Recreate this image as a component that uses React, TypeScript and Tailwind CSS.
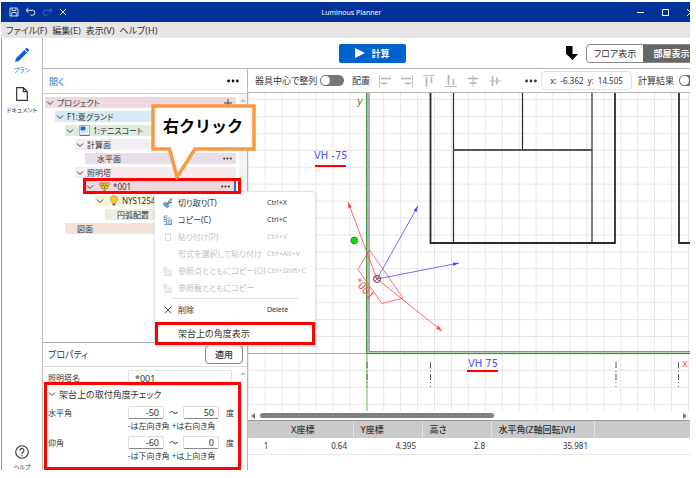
import { useState } from "react";
import clsx from "clsx";

const Dots = ({ className = "" }) => (
  <svg viewBox="0 0 12 4" className={clsx("shrink-0", className)} fill="currentColor">
    <circle cx="1.6" cy="2" r="1.4" />
    <circle cx="6" cy="2" r="1.4" />
    <circle cx="10.4" cy="2" r="1.4" />
  </svg>
);

const Chevron = () => (
  <svg viewBox="0 0 8 8" className="size-2 shrink-0" fill="none" stroke="#444">
    <path d="M1 2.5 4 5.5 7 2.5" />
  </svg>
);

const TowerIcon = () => (
  <svg viewBox="0 0 11 10" className="h-[10px] w-[11px] shrink-0" fill="#f7c62f" stroke="#6b5a1c" strokeWidth=".5">
    <path d="M5.5 5v4.6" />
    <circle cx="2.2" cy="2.3" r="1.8" />
    <circle cx="5.5" cy="2.3" r="1.8" />
    <circle cx="8.8" cy="2.3" r="1.8" />
    <circle cx="3.8" cy="5.2" r="1.8" />
    <circle cx="7.2" cy="5.2" r="1.8" />
    <path d="M4 8.6h3" />
  </svg>
);

const BulbIcon = () => (
  <svg viewBox="0 0 10 12" className="h-[11px] w-[10px] shrink-0">
    <path d="M5 .6a3.9 3.9 0 0 0-2.2 7.1L3.2 9h3.6l.4-1.3A3.9 3.9 0 0 0 5 .6Z" fill="#fbc52d" stroke="#a37a14" strokeWidth=".6" />
    <path d="M3.5 9.6h3v1.6h-3z" fill="#444" />
  </svg>
);

const RoomIcon = () => (
  <svg viewBox="0 0 11 11" className="size-[11px] shrink-0">
    <path d="M.5.5h10v10H.5z" fill="#fff" stroke="#9db7cf" />
    <path d="M1.5 1.5h5v4h-5z" fill="#0d6fe0" />
    <path d="M7.5 1.5h2v7h-8v-2h6z" fill="#d3e3f2" />
    <path d="M1 10.3h9.5" stroke="#444" strokeWidth=".8" />
  </svg>
);

const tree = [
  { name: "プロジェクト", pad: "ml-0", bg: "bg-[#eed9e0]", open: true, end: "plus" },
  { name: "F1:夏グランド", pad: "ml-[10px]", bg: "bg-[#d7e9f2]", open: true },
  { name: "1:テニスコート", pad: "ml-[20px]", bg: "bg-[#dfebe0]", open: true, icon: <RoomIcon /> },
  { name: "計算面", pad: "ml-[30px]", bg: "bg-[#f3edf5]", open: true },
  { name: "水平面", pad: "ml-[40px]", bg: "bg-[#e8deea]", end: "dots" },
  { name: "照明塔", pad: "ml-[30px]", bg: "bg-[#f7ebf0]", open: true },
  { name: "*001", pad: "ml-[40px]", bg: "bg-[#f0d8e1] border-r-2 border-[#1c6fd0]", open: true, icon: <TowerIcon />, end: "dots" },
  { name: "NYS12545", pad: "ml-[50px]", bg: "bg-[#f5f2da]", open: true, icon: <BulbIcon /> },
  { name: "円弧配置", pad: "ml-[60px]", bg: "bg-[#eeeedd]" },
  { name: "図面", pad: "ml-[20px]", bg: "bg-[#f2e2d8]" },
];

const menuItems = [
  { name: "切り取り(T)", key: "Ctrl+X", icon: "cut" },
  { name: "コピー(C)", key: "Ctrl+C", icon: "copy" },
  { name: "貼り付け(P)", key: "Ctrl+V", icon: "paste", off: true },
  { name: "形式を選択して貼り付け", key: "Ctrl+Alt+V", off: true },
  { name: "参照点とともにコピー(O)", key: "Ctrl+Shift+C", icon: "copy", off: true },
  { name: "参照軸とともにコピー", icon: "copy", off: true },
];

function MenuIcon({ kind }) {
  return (
    <svg viewBox="0 0 10 10" className="size-[10px] shrink-0" fill="none" strokeWidth=".9">
      {kind === "cut" && (
        <>
          <path d="M3.6 6 7.8.6 9 1.2 5 6.6M4.4 5.4 9 4.2" stroke="#5a5a5a" />
          <circle cx="2.2" cy="6" r="1.5" stroke="#2a86c8" fill="#6fb4e2" />
          <circle cx="4.2" cy="8" r="1.4" stroke="#2a86c8" fill="#6fb4e2" />
        </>
      )}
      {kind === "copy" && (
        <>
          <path d="M1 1h3.5M1 1v5.5h2" stroke="#8a98a6" />
          <path d="M3.5 2.8h3l2 2v4.4h-5z" stroke="#8a98a6" fill="#eef4fa" />
          <path d="M1 2.5h2M1 4.5h2M4.6 5.4h2.8M4.6 7.2h2.8M1 9.3h8" stroke="#4a90cf" />
        </>
      )}
      {kind === "paste" && <path d="M2.5 2h5v6.5h-5zM4 1.6h2" stroke="#777" />}
      {kind === "delete" && <path d="m1.5 1.5 7 7M8.5 1.5l-7 7" stroke="#444" />}
    </svg>
  );
}

const aligns = [
  { label: "左揃え", thin: "M.5 0v12", thick: "M2 3.5h10M2 8.5h6" },
  { label: "右揃え", thin: "M11.500 0v12", thick: "M10 3.5H0M10 8.5H4" },
  { label: "上揃え", thin: "M0 .5h12", thick: "M3.5 2v10M8.5 2v6" },
  { label: "下揃え", thin: "M0 11.500h12", thick: "M3.5 10V0M8.5 10V4" },
  { label: "上下中央", thin: "M6 0v12", thick: "M1 3.5h10M2.5 8h7" },
  { label: "左右中央", thin: "M0 6h12", thick: "M3.5 1v10M8 2.5v7" },
];

function Toggle({ label }) {
  return (
    <input
      type="checkbox"
      role="switch"
      aria-label={label}
      className="relative h-[11px] w-6 shrink-0 appearance-none rounded-full bg-[#777] before:absolute before:left-px before:top-px before:size-[9px] before:rounded-full before:bg-white"
    />
  );
}

function Arrow({ x, y, color }) {
  const angle = (Math.atan2(y - 187, x - 129) * 180) / Math.PI;
  return (
    <g stroke={color} fill={color}>
      <path d={`M129 187 ${x} ${y}`} strokeWidth=".8" />
      <path d="M0 0-6-1.8v3.6z" stroke="none" transform={`translate(${x} ${y}) rotate(${angle})`} />
    </g>
  );
}

function Drawing() {
  return (
    <svg className="absolute inset-0 size-full" fill="none">
      <defs>
        <pattern id="grid" x="16.7" y="6" width="16.93" height="16.93" patternUnits="userSpaceOnUse">
          <path d="M0 .5h17M.5 0v17" stroke="#e6e6e6" />
        </pattern>
      </defs>
      <rect width="100%" height="100%" fill="url(#grid)" />

      <g transform="translate(0 -1)">
        {/* courts */}
        <g stroke="#2b2b2b">
          <path d="M182.5 0v151H367V0M431 0v151h400" strokeWidth="1.8" />
          <path d="M205.5 0v151M344 0v151M274.5 0v58" strokeWidth="1.2" />
          <path d="M205 58h139" stroke="#555" strokeWidth="1.8" />
        </g>

        {/* axes */}
        <path d="M0 261.5h119" stroke="#f58a8a" />
        <path d="M119 262v60" stroke="#86cc86" strokeWidth="1.2" />
        <path d="M121 0v259.6h1000" stroke="#8b8b8b" strokeWidth="1.4" />
        <path d="M119.5 0v261h1000" stroke="#9fd09f" strokeWidth="1.4" />
        <path d="M118.6 0v261.6h1000" stroke="#338a33" />
        <path
          d="M119 270v25M182.5 270v25M368 270v25M430.5 270v25"
          stroke="#555"
          strokeDasharray="6 3 1 2 6 2 1 3 1 9"
        />

        {/* tower */}
        <path d="M121.5 158 155 206l-21 5.500-24-34z" stroke="#ff4a4a" strokeWidth=".8" />
        <Arrow x={100} y={110} color="#ff4040" />
        <Arrow x={194} y={239} color="#ff4040" />
        <Arrow x={170} y={114} color="#4848ff" />
        <Arrow x={211} y={171} color="#4848ff" />
        <circle cx="129" cy="187" r="3.5" stroke="#444" />
        <path d="m126.500 184.500 5 5M131.500 184.500l-5 5" stroke="#ff4040" />
        <circle cx="106.300" cy="148.500" r="3.400" fill="#0be00b" stroke="#267a26" strokeWidth=".8" />

        <g className="font-['Liberation_Sans_Narrow','DejaVu_Sans_Condensed',sans-serif] text-[11px]">
          <text x="66" y="67" fill="#5050ff">VH -75</text>
          <text x="220" y="275" fill="#5050ff">VH 75</text>
          <text x="434" y="275" fill="#ff5a5a">x</text>
          <text x="109" y="13" fill="#338a33" fontStyle="italic">y</text>
          <text fill="#ff4a4a" transform="translate(106 190) rotate(50)">*001</text>
        </g>
        <path d="M67 74h31M219 279h31" stroke="#f00" strokeWidth="2" />
      </g>
    </svg>
  );
}

function AngleRow({ label, from, to, hint }) {
  return (
    <div className="mt-1">
      <div className="flex items-center">
        <span className="w-20 text-[8px]">{label}</span>
        <input aria-label={label + " 最小"} defaultValue={from} className="h-[13px] w-9 rounded-xs border border-[#ddd] border-b-[#888] pr-1 text-right text-[9px]" />
        <span className="w-[19px] text-center text-[9px]">～</span>
        <input aria-label={label + " 最大"} defaultValue={to} className="h-[13px] w-9 rounded-xs border border-[#ddd] border-b-[#888] pr-1 text-right text-[9px]" />
        <span className="ml-[7px] text-[8px]">度</span>
      </div>
      <p className="mt-0.5 ml-20 h-[11px] pt-px text-[8px] whitespace-nowrap">{hint}</p>
    </div>
  );
}

export default function App() {
  const [view, setView] = useState("room");

  return (
    <div className="h-screen overflow-hidden bg-white pt-0.5 pr-1.5 pb-2 pl-px font-['Noto_Sans','Noto_Sans_CJK_JP',sans-serif] text-[9px] leading-none text-[#333] [font-feature-settings:'palt']">
      <div className="relative flex h-full flex-col">
        <header className="flex h-5 shrink-0 items-center overflow-hidden bg-[#00339a] text-white">
          <div className="flex flex-1 items-center gap-1.5 pl-2">
            <button aria-label="保存">
              <svg viewBox="0 0 10 10" className="size-[10px]" fill="none" stroke="#dce6ff" strokeWidth=".9">
                <path d="M1 1h6.8L9 2.2V9H1zM3 1v2.500h4V1M2.8 9V5.500h4.400V9" />
              </svg>
            </button>
            <button aria-label="元に戻す">
              <svg viewBox="0 0 11 10" className="h-[10px] w-[11px]" fill="none" stroke="#dce6ff">
                <path d="M3.5 1 1 3.3l2.5 2.3M1 3.3h6.5a2.400 2.400 0 0 1 0 4.900H5.500" />
              </svg>
            </button>
            <button aria-label="やり直し">
              <svg viewBox="0 0 11 10" className="h-[10px] w-[11px]" fill="none" stroke="#4467bb">
                <path d="m7.5 1 2.5 2.3-2.500 2.300M10 3.300H3.500a2.400 2.400 0 0 0 0 4.900h2" />
              </svg>
            </button>
            <button aria-label="キャンセル">
              <svg viewBox="0 0 8 8" className="size-2" fill="none" stroke="#dce6ff">
                <path d="m1 1 6 6M7 1 1 7" />
              </svg>
            </button>
          </div>
          <h1 className="text-[7px]">Luminous Planner</h1>
          <div className="-mr-1 flex flex-1 items-center justify-end gap-[18px]">
            <button aria-label="最小化">
              <svg viewBox="0 0 7 7" className="size-[7px]" stroke="#fff"><path d="M0 3.500h7" /></svg>
            </button>
            <button aria-label="最大化">
              <svg viewBox="0 0 7 7" className="size-[7px]" stroke="#fff" fill="none"><path d="M.5.5h6v6h-6z" /></svg>
            </button>
            <button aria-label="閉じる">
              <svg viewBox="0 0 7 7" className="size-[7px]" stroke="#fff"><path d="m0 0 7 7M7 0 0 7" /></svg>
            </button>
          </div>
        </header>

        <nav className="flex h-4 shrink-0 items-center gap-[5px] bg-[#e5e5e5] pl-[5px]">
          <button>ファイル(F)</button>
          <button>編集(E)</button>
          <button>表示(V)</button>
          <button>ヘルプ(H)</button>
        </nav>

        <div className="flex min-h-0 flex-1 border-l border-[#7d9be0]">
          <aside className="flex w-[41px] shrink-0 flex-col items-center border-r border-[#bbb] pt-[10px] text-[6px]">
            <button className="flex flex-col items-center gap-[5px] text-[#0d66cf]">
              <svg viewBox="0 0 14 14" className="size-[14px]" fill="currentColor">
                <path d="M0 14 1 10.200 9.300 2l2.800 2.800L3.800 13zM10 1.300l1-1c.5-.4 1-.4 1.400 0l1.300 1.300c.4.400.4 1 0 1.400l-1 1z" />
              </svg>
              プラン
            </button>
            <button className="mt-[14px] flex flex-col items-center gap-1.5">
              <svg viewBox="0 0 12 14" className="h-[14px] w-3" fill="none" stroke="#333" strokeWidth="1.2">
                <path d="M.7.7h6.600l4 4v8.600H.7zM7.300.7v4h4" />
              </svg>
              ドキュメント
            </button>
            <button className="mt-auto flex flex-col items-center gap-[5px]">
              <svg viewBox="0 0 14 14" className="size-[14px]" fill="none" stroke="#333" strokeWidth="1.1">
                <circle cx="7" cy="7" r="6.3" />
                <path d="M5 5.600a2 2 0 1 1 3 1.700c-.7.400-1 .7-1 1.500M7 9.800v1.200" />
              </svg>
              ヘルプ
            </button>
          </aside>

          <div className="flex min-w-0 flex-1 flex-col overflow-hidden">
            <div className="flex h-[31px] shrink-0 items-center border-b border-[#b5b5b5] pl-[296px]">
              <button className="flex h-[19px] w-[67px] items-center justify-center gap-1.5 rounded-xs bg-[#0062cc] font-bold text-white">
                <svg viewBox="0 0 10 10" className="size-[10px]" fill="currentColor"><path d="M0 0v10l10-5z" /></svg>
                計算
              </button>
              <button aria-label="下へ移動" className="ml-auto">
                <svg viewBox="0 0 12 15" className="h-[15px] w-3"><path d="M0 0h6.500v8H12l-5.500 6L2 9.500 0 8z" /></svg>
              </button>
              <div className="-mr-[11px] ml-2 flex h-[19px] shrink-0 overflow-hidden rounded-sm border border-[#888]">
                <button className={clsx("w-14", view === "floor" && "bg-[#666] text-white")} onClick={() => setView("floor")}>
                  フロア表示
                </button>
                <button className={clsx("w-[57px] font-bold", view === "room" && "bg-[#666] text-white")} onClick={() => setView("room")}>
                  部屋表示
                </button>
              </div>
            </div>

            <div className="flex min-h-0 flex-1">
              <section className="flex w-[205px] shrink-0 flex-col border-r border-[#b5b5b5]">
                <div className="flex h-[25px] shrink-0 items-center justify-between border-b border-[#ccc] pr-2 pl-1.5">
                  <a href="#open" className="text-[#1a73d0]">開く</a>
                  <button aria-label="その他"><Dots className="h-1 w-3 text-black" /></button>
                </div>
                <div className="flex min-h-0 flex-1 justify-between">
                  <ul className="flex w-[193px] flex-col gap-[3px] pt-[3px] pl-0.5">
                    {tree.map((row) => (
                      <li key={row.name} className={clsx("flex h-[11px] items-center gap-[3px] pl-px text-[8px] whitespace-nowrap", row.pad, row.bg)}>
                        {row.open ? <Chevron /> : <span className="w-2" />}
                        {row.icon && <span className="ml-0.5">{row.icon}</span>}
                        <span>{row.name}</span>
                        {row.end === "dots" && <Dots className="mr-1 ml-auto h-[3px] w-[9px]" />}
                        {row.end === "plus" && (
                          <svg viewBox="0 0 8 8" className="mr-1 ml-auto size-2" stroke="#444"><path d="M0 4h8M4 0v8" /></svg>
                        )}
                      </li>
                    ))}
                  </ul>
                  <div className="w-2 bg-[#f3f3f3] pt-1">
                    <svg viewBox="0 0 8 4" className="h-1 w-2" fill="#c4c4c4"><path d="m1 4 3-3 3 3z" /></svg>
                  </div>
                </div>

                <div className="flex h-[25px] shrink-0 items-center justify-between border-t border-b border-t-[#aaa] border-b-[#ddd] pr-1 pl-[5px]">
                  <h2>プロパティ</h2>
                  <button className="h-[19px] w-[38px] rounded-sm border border-[#888] font-medium">適用</button>
                </div>
                <div className="flex h-[103px] shrink-0 justify-between">
                  <div className="pt-[3px] pl-[5px]">
                    <div className="flex items-center">
                      <label htmlFor="tower" className="w-20 text-[8px]">照明塔名</label>
                      <input id="tower" defaultValue="*001" className="h-4 w-[104px] rounded-xs border border-[#e2e2e2] pl-1.5" />
                    </div>
                    <button className="flex h-4 items-center gap-[3px]">
                      <Chevron />
                      架台上の取付角度チェック
                    </button>
                    <AngleRow label="水平角" from="-50" to="50" hint="-は左向き角 +は右向き角" />
                    <AngleRow label="仰角" from="-60" to="0" hint="-は下向き角 +は上向き角" />
                  </div>
                  <div className="w-2 pt-1">
                    <svg viewBox="0 0 8 4" className="h-1 w-2" fill="#c4c4c4"><path d="m1 4 3-3 3 3z" /></svg>
                  </div>
                </div>
              </section>

              <main className="flex min-w-0 flex-1 flex-col overflow-hidden">
                <div className="flex h-6 shrink-0 items-center border-b border-[#b5b5b5] pl-[7px] whitespace-nowrap">
                  <span className="w-[65px] shrink-0">器具中心で整列</span>
                  <Toggle label="器具中心で整列" />
                  <span className="ml-2 w-[27px] shrink-0">配置</span>
                  <div className="flex shrink-0 gap-[10px]">
                    {aligns.map((a) => (
                      <button key={a.label} aria-label={a.label}>
                        <svg viewBox="0 0 12 12" className="size-3" fill="none">
                          <path d={a.thin} stroke="#bdbdbd" />
                          <path d={a.thick} stroke="#b3b3b3" strokeWidth="1.6" />
                        </svg>
                      </button>
                    ))}
                  </div>
                  <button aria-label="その他" className="ml-6 shrink-0"><Dots className="h-1 w-3" /></button>
                  <div className="ml-1 flex h-[19px] w-[91px] shrink-0 items-center justify-center gap-1 rounded-sm border border-[#e0e0e0] text-[8px]">
                    <span>x:</span>
                    <span>-6.362</span>
                    <span>y:</span>
                    <span>14.505</span>
                  </div>
                  <span className="mr-[5px] ml-1.5 shrink-0">計算結果</span>
                  <Toggle label="計算結果" />
                </div>

                <div className="relative min-h-0 flex-1 overflow-hidden">
                  <Drawing />
                </div>

                <div className="flex h-[9px] shrink-0 items-center justify-between px-[3px]">
                  <svg viewBox="0 0 4 6" className="h-1.5 w-1" fill="#777"><path d="M4 0v6L0 3z" /></svg>
                  <div className="mx-[5px] flex-1">
                    <div className="h-[5px] w-[56%] rounded-full bg-[#7f7f7f]" />
                  </div>
                  <svg viewBox="0 0 4 6" className="h-1.5 w-1" fill="#777"><path d="M0 0v6l4-3z" /></svg>
                </div>

                <div className="h-[50px] shrink-0 border-t border-[#999]">
                  <table className="w-full table-fixed border-collapse">
                    <thead>
                      <tr className="h-[17px] bg-[#cacaca] text-left text-[9px] whitespace-nowrap">
                        <th className="w-9" />
                        <th className="w-[69px] border-r border-[#e2e2e2] pl-[7px] font-medium">X座標</th>
                        <th className="w-[69px] border-r border-[#e2e2e2] pl-[7px] font-medium">Y座標</th>
                        <th className="w-[69px] border-r border-[#e2e2e2] pl-[7px] font-medium">高さ</th>
                        <th className="w-[103px] border-r border-[#e2e2e2] pl-[7px] font-medium">水平角(Z軸回転)VH</th>
                        <th />
                      </tr>
                    </thead>
                    <tbody>
                      <tr className="h-4 border-b border-[#e8e8e8] text-right text-[8px]">
                        <td className="text-center">1</td>
                        <td className="pr-1.5">0.64</td>
                        <td className="pr-1.5">4.395</td>
                        <td className="pr-1.5">2.8</td>
                        <td className="pr-1.5">35.981</td>
                        <td />
                      </tr>
                    </tbody>
                  </table>
                </div>
              </main>
            </div>
          </div>
        </div>

        {/* context menu */}
        <div role="menu" className="absolute top-[189px] left-[153px] w-[162px] rounded-sm border border-[#e4e4e4] bg-white pt-0.5 shadow-sm">
          {menuItems.map((item) => (
            <button key={item.name} role="menuitem" disabled={item.off} className={clsx("flex h-[17px] w-full items-center pl-2 text-left text-[8px] whitespace-nowrap", item.off && "text-[#c0c0c0]")}>
              <span className={clsx(item.off && "opacity-30")}><MenuIcon kind={item.icon} /></span>
              <span className="ml-[5px] w-[89px]">{item.name}</span>
              <span className="text-[7px]">{item.key}</span>
            </button>
          ))}
          <hr className="mx-[17px] my-0.5 border-[#ddd]" />
          <button role="menuitem" className="flex h-[17px] w-full items-center pl-2 text-left text-[8px]">
            <MenuIcon kind="delete" />
            <span className="ml-[5px] w-[89px]">削除</span>
            <span className="text-[7px]">Delete</span>
          </button>
          <button role="menuitem" className="mt-1 flex h-[23px] w-full items-center border-3 border-[#f00] pl-5 text-left">
            架台上の角度表示
          </button>
        </div>

        {/* highlights and callout */}
        <div className="pointer-events-none absolute top-[176px] left-[82px] h-4 w-[158px] border-3 border-[#f00]" />
        <div className="pointer-events-none absolute bottom-0 left-[43px] h-[88px] w-[197px] border-3 border-[#f00]" />
        <div className="absolute top-[102px] left-[150px] h-[76px] w-[105px]">
          <svg viewBox="0 0 105 76" className="absolute inset-0 size-full" fill="#fff" stroke="#f99a42" strokeWidth="3.5">
            <path d="M2 2h101v43H44L26 73 18.500 45H2z" />
          </svg>
          <p className="relative pt-[14px] pl-3 text-[16px] font-bold whitespace-nowrap text-black [font-feature-settings:normal]">右クリック</p>
        </div>
      </div>
    </div>
  );
}
